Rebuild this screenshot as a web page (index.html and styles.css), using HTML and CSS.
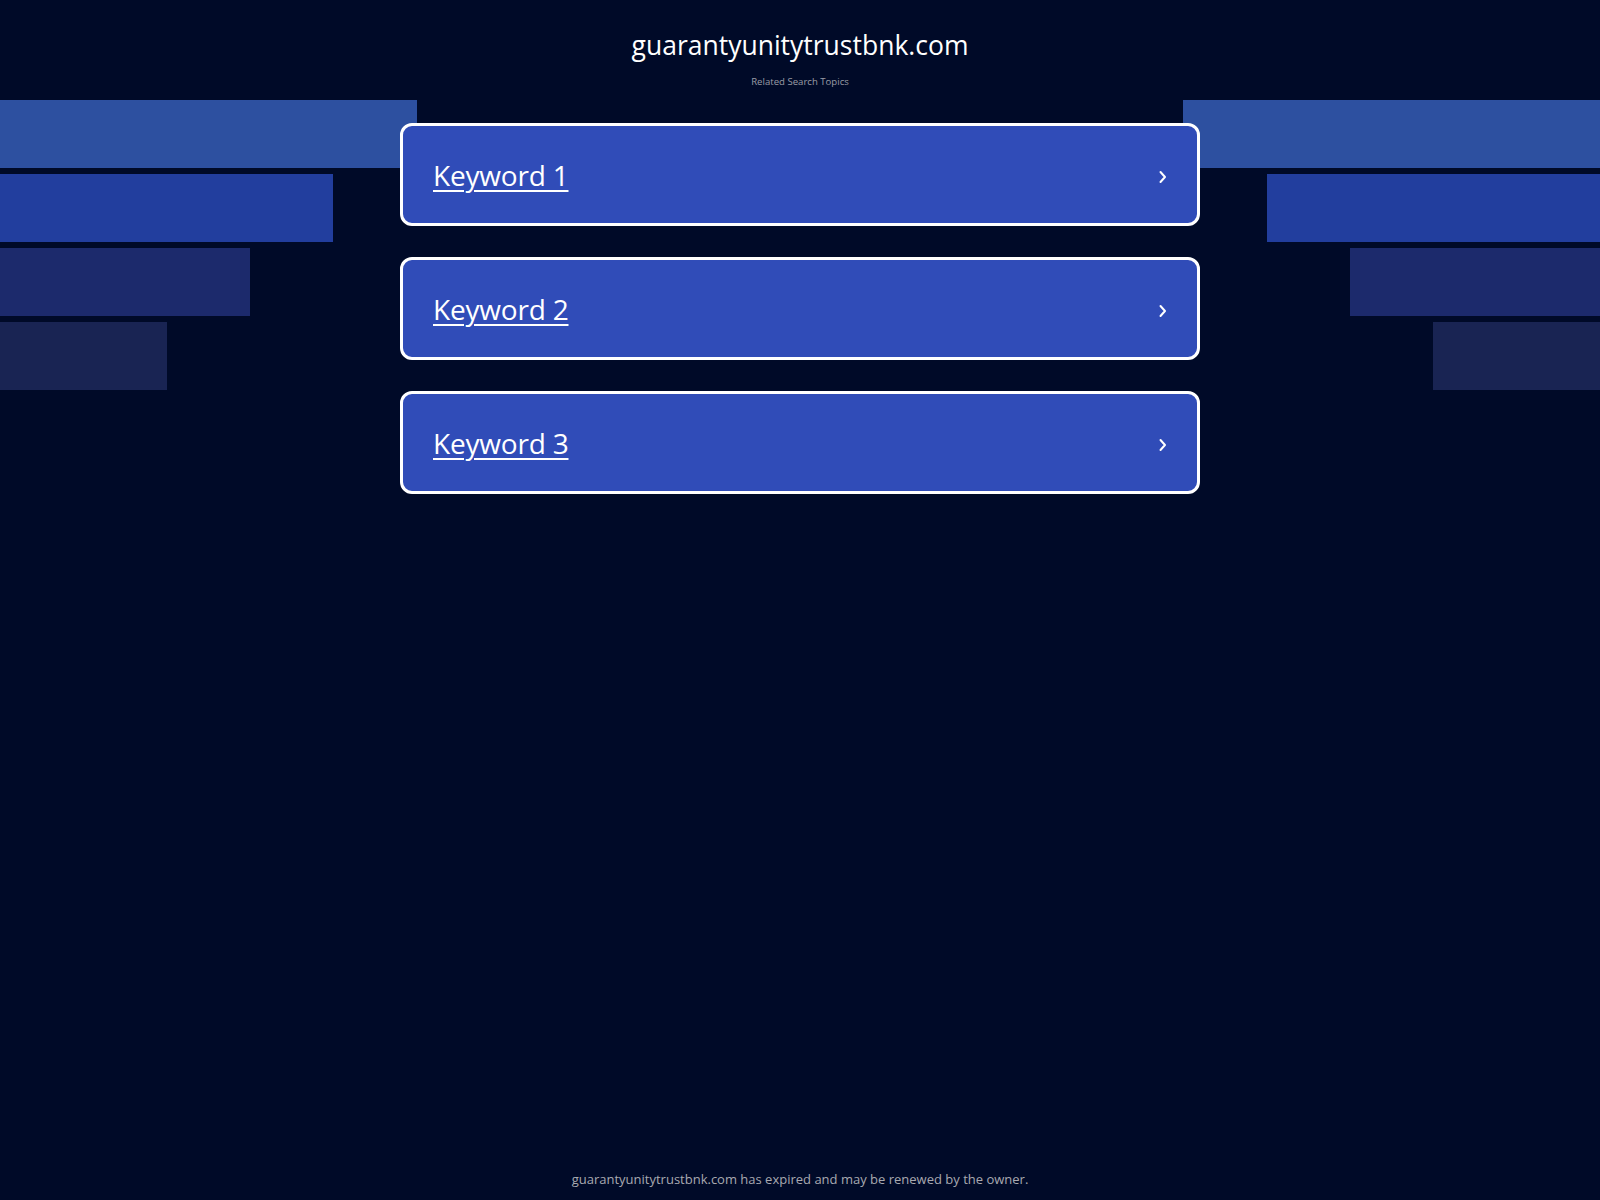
FILE: index.html
```html
<!DOCTYPE html>
<html lang="en">
<head>
<meta charset="utf-8">
<title>guarantyunitytrustbnk.com</title>
<link rel="stylesheet" href="styles.css">
</head>
<body>
<div class="bg" aria-hidden="true">
  <div class="bars bars-left">
    <div class="bar b1"></div>
    <div class="bar b2"></div>
    <div class="bar b3"></div>
    <div class="bar b4"></div>
  </div>
  <div class="bars bars-right">
    <div class="bar b1"></div>
    <div class="bar b2"></div>
    <div class="bar b3"></div>
    <div class="bar b4"></div>
  </div>
</div>
<div class="page">
  <header class="header">
    <h1 class="title">guarantyunitytrustbnk.com</h1>
    <p class="subtitle">Related Search Topics</p>
  </header>
  <main class="list">
    <a class="card" href="#"><span class="kw">Keyword 1</span><svg class="chev" width="10" height="14" viewBox="0 0 10 14"><polyline points="2.5,2 7,7 2.5,12" fill="none" stroke="#fff" stroke-width="2" stroke-linecap="round" stroke-linejoin="round"/></svg></a>
    <a class="card" href="#"><span class="kw">Keyword 2</span><svg class="chev" width="10" height="14" viewBox="0 0 10 14"><polyline points="2.5,2 7,7 2.5,12" fill="none" stroke="#fff" stroke-width="2" stroke-linecap="round" stroke-linejoin="round"/></svg></a>
    <a class="card" href="#"><span class="kw">Keyword 3</span><svg class="chev" width="10" height="14" viewBox="0 0 10 14"><polyline points="2.5,2 7,7 2.5,12" fill="none" stroke="#fff" stroke-width="2" stroke-linecap="round" stroke-linejoin="round"/></svg></a>
  </main>
  <footer class="footer">guarantyunitytrustbnk.com has expired and may be renewed by the owner.</footer>
</div>
</body>
</html>
```
FILE: styles.css
```css
html, body {
  margin: 0;
  padding: 0;
}
body {
  background: #000a28;
  font-family: "Open Sans", "Noto Sans", "DejaVu Sans", sans-serif;
  color: #fff;
  min-height: 100vh;
  position: relative;
  overflow: hidden;
}
.bg {
  position: absolute;
  top: 100px;
  left: 0;
  right: 0;
  display: flex;
  justify-content: space-between;
  z-index: 0;
}
.bars {
  width: 417px;
  display: flex;
  flex-direction: column;
  gap: 6px;
}
.bars-left { align-items: flex-start; }
.bars-right { align-items: flex-end; }
.bar { height: 68px; }
.b1 { width: 417px; background: #2d50a0; }
.b2 { width: 333px; background: #223e9e; }
.b3 { width: 250px; background: #1c2a6c; }
.b4 { width: 167px; background: #192453; }

.page {
  position: relative;
  z-index: 1;
  min-height: 100vh;
  display: flex;
  flex-direction: column;
  align-items: center;
}
.header {
  text-align: center;
  padding-top: 28px;
}
.title {
  margin: 0;
  font-size: 26.5px;
  font-weight: 400;
  line-height: 34px;
}
.subtitle {
  margin: 13px 0 0;
  font-size: 9.6px;
  line-height: 14px;
  color: #9a9ca6;
}
.list {
  margin-top: 34px;
  width: 800px;
  display: flex;
  flex-direction: column;
  gap: 31px;
}
.card {
  box-sizing: border-box;
  height: 103px;
  border: 3px solid #fff;
  border-radius: 12px;
  background: #304cb8;
  display: flex;
  align-items: center;
  justify-content: space-between;
  padding: 0 29px 0 30px;
  color: #fff;
  text-decoration: none;
}
.kw {
  font-size: 28px;
  line-height: 36px;
  text-decoration: underline;
  text-decoration-thickness: 2px;
  text-underline-offset: 4px;
  letter-spacing: -0.2px;
}
.chev {
  display: block;
  margin-top: 5px;
}
.footer {
  margin-top: auto;
  padding-bottom: 12px;
  font-size: 13px;
  line-height: 18px;
  color: #a8a9b0;
}
```
